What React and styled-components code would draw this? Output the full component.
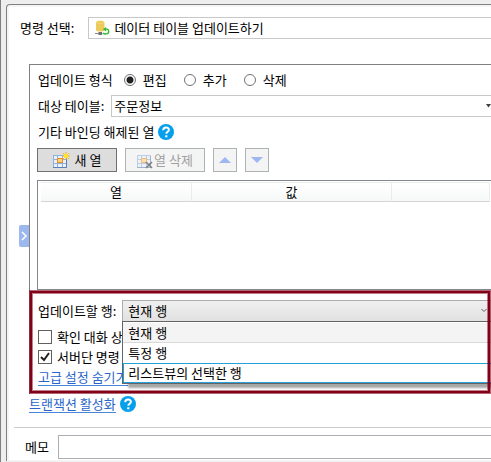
import React, { useState } from "react";
import styled, { createGlobalStyle, css } from "styled-components";

const GlobalStyle = createGlobalStyle`
  *, *::before, *::after { box-sizing: border-box; }
  body {
    margin: 0;
    background: #eeeeee;
    color: #000;
    font: 13px/20px "Noto Sans CJK KR", sans-serif;
  }
  button, input, select { font: inherit; color: inherit; margin: 0; }
`;

const Window = styled.div`
  display: flex;
  min-height: 100vh;
  padding-top: 4px;
  border-left: 1px solid #808080;
  overflow: hidden;
`;

const Panel = styled.main`
  flex: 1;
  min-width: 0;
  margin: 0 0 1px 5px;
  padding-top: 2px;
  padding-left: 2px;
  background: #f5f5f5;
  border: solid #808080;
  border-width: 1px 0 0 1px;
  border-top-left-radius: 4px;
`;

const PanelBody = styled.div`
  padding-top: 10px;
  padding-bottom: 1px;
  background: #fff;
`;

const CommandRow = styled.div`
  display: flex;
  align-items: center;
  gap: 14px;
  padding-left: 11px;
  margin-bottom: 25px;
`;

const Field = styled.div`
  position: relative;
  display: flex;
  flex: 1;
  align-items: center;
  min-width: 0;
  height: 22px;
  padding-left: ${(p) => (p.$icon ? "6px" : "2px")};
  gap: 4px;
  background: #fff;
  border: solid #c8c8c8;
  border-width: 1px 0 1px 1px;
`;

const Select = styled.select`
  flex: 1;
  min-width: 0;
  height: 20px;
  padding: 0;
  border: 0;
  background: transparent;
  appearance: none;
  outline: none;
`;

const DropArrow = styled.svg`
  position: absolute;
  right: ${(p) => (p.$inset ? "4px" : "0")};
  top: ${(p) => (p.$inset ? "7px" : "8px")};
  pointer-events: none;
`;

const Workspace = styled.div`
  display: flex;
  align-items: center;
  padding-left: 10px;
`;

const Collapse = styled.button`
  display: grid;
  place-items: center;
  width: 10px;
  height: 22px;
  margin-bottom: 6px;
  padding: 0;
  border: 0;
  border-radius: 2px 0 0 2px;
  background: #9db8ec;
`;

const WorkspaceBody = styled.div`
  flex: 1;
  min-width: 0;
`;

const Group = styled.section`
  border: solid #808080;
  border-width: 1px 0 0 1px;
  padding-top: 4px;
`;

const Row = styled.div`
  display: flex;
  align-items: center;
  height: 22px;
  margin-bottom: 4px;
  padding-left: 8px;
  gap: ${(p) => p.$gap || 0}px;
`;

const RadioSet = styled.div`
  display: flex;
  padding-left: 11px;
`;

const Option = styled.label`
  display: flex;
  align-items: center;
  gap: 7px;
  width: 60px;
`;

const Radio = styled.input`
  appearance: none;
  flex: none;
  width: 12px;
  height: 12px;
  border: 1px solid #707070;
  border-radius: 50%;
  background: #fff;
  &:checked {
    background: radial-gradient(circle, #202020 3px, #fff 4px);
  }
`;

const Toolbar = styled.div`
  display: flex;
  gap: 8px;
  padding-left: 7px;
  margin: 5px 0 8px;
`;

const ToolButton = styled.button`
  display: flex;
  align-items: center;
  justify-content: center;
  gap: ${(p) => p.$gap || 0}px;
  width: ${(p) => (p.$square ? 24 : 80)}px;
  height: 24px;
  padding: 0;
  line-height: 20px;
  border: 1px solid #707070;
  background: #dddddd;
  ${(p) =>
    p.disabled &&
    css`
      color: #a0a0a0;
      border-color: #adb2b5;
      background: #f4f4f4;
    `}
`;

const GridBox = styled.div`
  height: 110px;
  margin-left: 7px;
  padding: 1px 1px 0 3px;
  border: solid #828790;
  border-width: 1px 0 1px 1px;
`;

const ColumnTable = styled.table`
  width: 100%;
  table-layout: fixed;
  border-collapse: separate;
  border-spacing: 0;
`;

const Head = styled.th`
  width: ${(p) => p.$width};
  height: 20px;
  padding: 0;
  line-height: 18px;
  font-weight: 400;
  background: linear-gradient(#fff, #f6f8f8);
  border: solid #ececec;
  border-width: 1px 1px 1px 0;
  border-bottom-color: #d5d5d5;
`;

const Highlighted = styled.div`
  position: relative;
  height: 104px;
  padding-top: 10px;
  &::after {
    content: "";
    position: absolute;
    z-index: 3;
    inset: 1px 1px 1px 0;
    border: 2px solid #820018;
    box-shadow: 0 0 0 1px rgba(130, 0, 24, 0.6), inset 0 0 0 1px rgba(130, 0, 24, 0.5);
    pointer-events: none;
  }
`;

const Combo = styled.div`
  position: relative;
  flex: 1;
  min-width: 0;
  height: 22px;
  display: flex;
  padding-left: 5px;
  border: solid #acacac;
  border-width: 1px 0 1px 1px;
  background: linear-gradient(#f0f0f0, #e1e1e1);
`;

const List = styled.ul`
  position: absolute;
  z-index: 2;
  top: 20px;
  left: -1px;
  right: 0;
  margin: 0;
  padding: 1px 0 0;
  list-style: none;
  background: #fff;
  border: solid #646464;
  border-width: 1px 0 1px 1px;
  box-shadow: 6px 4px 2px rgba(0, 0, 0, 0.35);
`;

const ListItem = styled.li`
  height: 20px;
  padding-left: 4px;
  line-height: 18px;
  border: 1px solid transparent;
  border-right: 0;
  ${(p) =>
    p.$current &&
    css`
      background: #f4f4f4;
      border-bottom-color: #d9d9d9;
    `}
  ${(p) =>
    p.$hovered &&
    css`
      border-color: #26a0da;
    `}
`;

const Checks = styled.div`
  display: grid;
  grid-auto-rows: 20px;
  padding: 1px 0 0 8px;
`;

const CheckLabel = styled.label`
  display: flex;
  align-items: center;
  gap: 5px;
`;

const CheckFrame = styled.span`
  position: relative;
  display: flex;
`;

const Check = styled.input`
  appearance: none;
  width: 14px;
  height: 14px;
  border: 1px solid #606060;
  background: #fff;
  & + svg { display: none; }
  &:checked + svg { display: block; }
`;

const Tick = styled.svg`
  position: absolute;
  inset: 0;
  pointer-events: none;
`;

const Link = styled.a`
  align-self: center;
  justify-self: start;
  line-height: 16px;
  color: #2a66c8;
  text-decoration: none;
  border-bottom: 1px solid #4a86d8;
`;

const LinkRow = styled.div`
  display: flex;
  align-items: center;
  gap: 4px;
  height: 20px;
`;

const HelpButton = styled.button`
  display: flex;
  padding: 0;
  border: 0;
  background: none;
`;

const MemoRow = styled.div`
  display: flex;
  align-items: center;
  gap: 9px;
  margin: 13px 0 0 5px;
  padding: 7px 0 0 11px;
  border-top: 1px solid #cccccc;
`;

const MemoInput = styled.input`
  flex: 1;
  min-width: 0;
  height: 24px;
  padding: 0 4px;
  background: #fff;
  border: solid #abadb3;
  border-width: 1px 0 1px 1px;
  border-radius: 0;
`;

function DatabaseIcon() {
  return (
    <svg width="15" height="16" viewBox="0 0 15 16" aria-hidden="true">
      <path d="M1 2.500C1 .3 9.500.3 9.500 2.500v7.500c0 2-8.500 2-8.500 0z" fill="#edcb5b" />
      <path d="M1.500 2.500c1.500 1.300 6 1.300 7.500 0" fill="none" stroke="#f3d67a" />
      <path d="M0 13.500h8" stroke="#8c8c8c" />
      <path d="M3.500 12h3.500v3h-3.500z" fill="#707070" />
      <path d="M8 13c1.500 1.600 5.800 1.200 5.700-1.600 0-1.900-1.700-2.700-3.200-2.100" fill="none" stroke="#fff" strokeWidth="3" />
      <path d="M8 13c1.500 1.600 5.800 1.200 5.700-1.600 0-1.900-1.700-2.700-3.200-2.100" fill="none" stroke="#35b92d" strokeWidth="1.400" />
      <path d="M7.800 9.300l3.400-2.300v4.500z" fill="#35b92d" />
    </svg>
  );
}

function TableIcon({ remove }) {
  return (
    <svg width="17" height="17" viewBox="0 0 17 17" aria-hidden="true">
      <g opacity={remove ? 0.55 : 1}>
        <path d="M0 3h14v13H0z" fill="#8fb0dc" />
        <path d="M1 4h3v3H1zM5 4h4v3H5zM10 4h3v3h-3zM1 8h3v3H1zM10 8h3v3h-3zM1 12h3v3H1zM5 12h4v3H5zM10 12h3v3h-3z" fill="#e8f1fc" />
        <path d="M0 15.500h13.500V4" fill="none" stroke="#5b7fb4" />
        <path d="M4.500 6.500h5v4h-5z" fill="#ffd27a" stroke="#f08a18" />
      </g>
      {remove ? (
        <path d="M9 10l6 6M15 10l-6 6" stroke="#808080" strokeWidth="1.600" />
      ) : (
        <g>
          <path d="M13 0v8M9 4h8M10 1l6 6M16 1l-6 6" stroke="#fbb02f" />
          <circle cx="13" cy="4" r="2.300" fill="#ffe62e" />
        </g>
      )}
    </svg>
  );
}

function Help() {
  return (
    <HelpButton type="button" aria-label="도움말">
      <svg width="16" height="16" viewBox="0 0 16 16" aria-hidden="true">
        <circle cx="8" cy="8" r="8" fill="#059feb" />
        <path d="M5.200 6.200c0-3.600 5.700-3.500 5.700-.4 0 2-2.600 1.900-2.600 4" fill="none" stroke="#fff" strokeWidth="2" />
        <path d="M7.200 11.300h2.200v2H7.200z" fill="#fff" />
      </svg>
    </HelpButton>
  );
}

const MODES = ["편집", "추가", "삭제"];
const TARGET_ROWS = ["현재 행", "특정 행", "리스트뷰의 선택한 행"];

function CheckOption({ label, defaultChecked }) {
  return (
    <CheckLabel>
      <CheckFrame>
        <Check type="checkbox" defaultChecked={defaultChecked} />
        <Tick width="14" height="14" viewBox="0 0 14 14" aria-hidden="true">
          <path d="M3 7l3 3 5-7" fill="none" stroke="#202020" strokeWidth="2" />
        </Tick>
      </CheckFrame>
      {label}
    </CheckLabel>
  );
}

export default function App() {
  const [mode, setMode] = useState("편집");
  const [target, setTarget] = useState(TARGET_ROWS[0]);
  const [hovered, setHovered] = useState(2);

  return (
    <Window>
      <GlobalStyle />
      <Panel>
        <PanelBody>
          <CommandRow>
            <label htmlFor="command">명령 선택:</label>
            <Field $icon>
              <DatabaseIcon />
              <Select id="command">
                <option>데이터 테이블 업데이트하기</option>
              </Select>
            </Field>
          </CommandRow>

          <Workspace>
            <Collapse type="button" aria-label="접기">
              <svg width="8" height="12" viewBox="0 0 8 12" aria-hidden="true">
                <path d="M2 2l4 4-4 4" fill="none" stroke="#fff" strokeWidth="1.500" />
              </svg>
            </Collapse>
            <WorkspaceBody>
              <Group>
                <Row>
                  <span id="mode-label">업데이트 형식</span>
                  <RadioSet role="radiogroup" aria-labelledby="mode-label">
                    {MODES.map((m) => (
                      <Option key={m}>
                        <Radio type="radio" name="mode" checked={mode === m} onChange={() => setMode(m)} />
                        {m}
                      </Option>
                    ))}
                  </RadioSet>
                </Row>
                <Row $gap={7}>
                  <label htmlFor="table">대상 테이블:</label>
                  <Field>
                    <Select id="table">
                      <option>주문정보</option>
                    </Select>
                    <DropArrow width="5" height="4" viewBox="0 0 5 4" aria-hidden="true">
                      <path d="M0 0h5L2.500 3.500z" fill="#404040" />
                    </DropArrow>
                  </Field>
                </Row>
                <Row $gap={4}>
                  기타 바인딩 해제된 열
                  <Help />
                </Row>
                <Toolbar>
                  <ToolButton type="button" $gap={5}>
                    <TableIcon />새 열
                  </ToolButton>
                  <ToolButton type="button" disabled>
                    <TableIcon remove />열 삭제
                  </ToolButton>
                  <ToolButton type="button" $square disabled aria-label="위로">
                    <svg width="12" height="6" viewBox="0 0 12 6"><path d="M0 6l6-6 6 6z" fill="#9db8f0" /></svg>
                  </ToolButton>
                  <ToolButton type="button" $square disabled aria-label="아래로">
                    <svg width="12" height="6" viewBox="0 0 12 6"><path d="M0 0h12L6 6z" fill="#9db8f0" /></svg>
                  </ToolButton>
                </Toolbar>
                <GridBox>
                  <ColumnTable>
                    <thead>
                      <tr>
                        <Head $width="151px">열</Head>
                        <Head $width="200px">값</Head>
                        <Head $width="auto" aria-label="동작" />
                      </tr>
                    </thead>
                  </ColumnTable>
                </GridBox>

                <Highlighted>
                  <Row $gap={6}>
                    <label htmlFor="target">업데이트할 행:</label>
                    <Combo>
                      <Select id="target" value={target} onChange={(e) => setTarget(e.target.value)}>
                        {TARGET_ROWS.map((r) => (
                          <option key={r}>{r}</option>
                        ))}
                      </Select>
                      <DropArrow $inset width="6" height="5" viewBox="0 0 6 5" aria-hidden="true">
                        <path d="M.5 1L3 3.500 5.500 1" fill="none" stroke="#606060" />
                      </DropArrow>
                      <List role="listbox" aria-label="업데이트할 행">
                        {TARGET_ROWS.map((r, i) => (
                          <ListItem
                            key={r}
                            role="option"
                            aria-selected={r === target}
                            $current={r === target}
                            $hovered={i === hovered}
                            onMouseEnter={() => setHovered(i)}
                            onClick={() => setTarget(r)}
                          >
                            {r}
                          </ListItem>
                        ))}
                      </List>
                    </Combo>
                  </Row>
                  <Checks>
                    <CheckOption label="확인 대화 상" />
                    <CheckOption label="서버단 명령" defaultChecked />
                    <Link href="#advanced">고급 설정 숨기기</Link>
                  </Checks>
                </Highlighted>
              </Group>
              <LinkRow>
                <Link href="#transaction">트랜잭션 활성화</Link>
                <Help />
              </LinkRow>
            </WorkspaceBody>
          </Workspace>

          <MemoRow>
            <label htmlFor="memo">메모</label>
            <MemoInput id="memo" type="text" />
          </MemoRow>
        </PanelBody>
      </Panel>
    </Window>
  );
}
